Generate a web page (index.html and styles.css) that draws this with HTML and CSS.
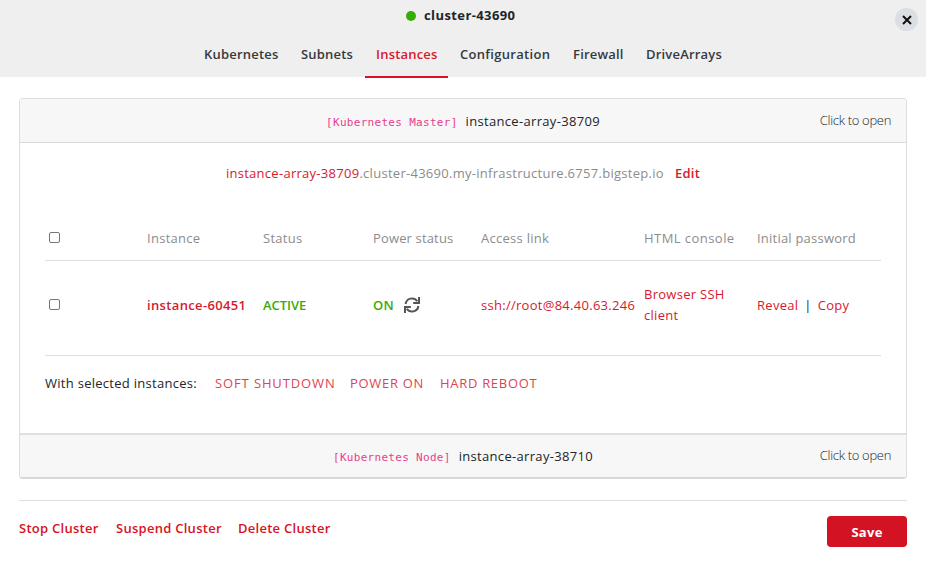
FILE: index.html
```html
<!DOCTYPE html>
<html lang="en">
<head>
<meta charset="utf-8">
<title>cluster-43690</title>
<link rel="stylesheet" href="styles.css">
</head>
<body>
<header class="header">
  <div class="title"><span class="dot"></span><span class="title-text">cluster-43690</span></div>
  <button class="close" aria-label="Close"><svg width="10" height="10" viewBox="0 0 10 10"><path d="M1 1L9 9M9 1L1 9" stroke="#111" stroke-width="2"/></svg></button>
  <nav class="tabs">
    <a class="tab">Kubernetes</a>
    <a class="tab">Subnets</a>
    <a class="tab active">Instances</a>
    <a class="tab wide">Configuration</a>
    <a class="tab">Firewall</a>
    <a class="tab">DriveArrays</a>
  </nav>
</header>
<main class="main">
  <section class="panel">
    <div class="bar bar-top">
      <span></span>
      <div class="bar-title"><code>[Kubernetes Master]</code><span class="array">instance-array-38709</span></div>
      <span class="hint">Click to open</span>
    </div>
    <div class="content">
      <div class="host"><span class="red">instance-array-38709</span><span>.cluster-43690.my-infrastructure.6757.bigstep.io</span><a class="red edit">Edit</a></div>
      <div class="row head">
        <input type="checkbox">
        <span>Instance</span><span>Status</span><span class="power-label">Power status</span><span>Access link</span><span class="console-label">HTML console</span><span class="password-label">Initial password</span>
      </div>
      <div class="row data">
        <input type="checkbox">
        <a class="red name">instance-60451</a>
        <span class="green active-state">ACTIVE</span>
        <span class="power"><span class="green on">ON</span><svg width="16" height="16" viewBox="0 0 16 16" fill="none" stroke="#555" stroke-width="2"><path d="M1.6 7A6.4 6.4 0 0 1 13.2 4.2M14.4 9A6.4 6.4 0 0 1 2.8 11.8"/><path d="M15 0V6H9.2M1 16V10H6.8"/></svg></span>
        <a class="red">ssh://root@84.40.63.246</a>
        <a class="red">Browser SSH<br>client</a>
        <span><a class="red">Reveal</a><span class="sep">|</span><a class="red">Copy</a></span>
      </div>
      <div class="actions"><span class="with">With selected instances:</span><a class="soft">SOFT SHUTDOWN</a><a class="on-action">POWER ON</a><a>HARD REBOOT</a></div>
    </div>
    <div class="bar bar-bottom">
      <span></span>
      <div class="bar-title"><code>[Kubernetes Node]</code><span class="array">instance-array-38710</span></div>
      <span class="hint">Click to open</span>
    </div>
  </section>
  <footer class="footer">
    <a class="stop">Stop Cluster</a><a class="suspend">Suspend Cluster</a><a>Delete Cluster</a>
    <button class="save">Save</button>
  </footer>
</main>
</body>
</html>
```
FILE: styles.css
```css
* { box-sizing: border-box; }
body { margin: 0; background: #fff; color: #212529; font: 13px/21px "Open Sans", sans-serif; letter-spacing: .28px; white-space: nowrap; }
button { font: inherit; letter-spacing: inherit; border: 0; padding: 0; }
.header { position: relative; height: 77px; background: #efefef; }
.title { display: flex; align-items: center; height: 31px; padding-left: 406px; font-weight: 700; letter-spacing: .4px; }
.dot { width: 10px; height: 10px; margin-right: 8px; border-radius: 50%; background: #37ac04; }
.close { position: absolute; top: 8px; right: 8px; width: 23px; height: 23px; border-radius: 50%; background: #dbdee4; display: flex; align-items: center; justify-content: center; }
.tabs { display: grid; grid-template-columns: 97px 75px 84px 113px 73px 96px; height: 47px; margin-left: 193px; font-weight: 600; letter-spacing: .2px; color: #343a40; }
.tab { padding: 13px 0 0 11px; }
.tab.active { width: 83px; border-bottom: 2px solid #d61224; color: #d61a2c; }
.wide { letter-spacing: .3px; }
.main { padding: 21px 19px 0; }
.panel { border: 1px solid #dedede; border-bottom: 2px solid #d8d8d8; border-radius: 4px; height: 381px; overflow: hidden; }
.bar { display: grid; grid-template-columns: 1fr auto 1fr; align-items: center; height: 44px; padding: 0 15px; background: #f7f7f7; color: #212529; }
.bar-top { border-bottom: 1px solid #d8d8d8; }
.bar-title { padding-top: 1px; }
.bar-bottom { height: 45px; border-top: 2px solid #dfdfdf; }
.bar-bottom .bar-title { padding-top: 0; }
.bar-bottom .hint { margin-top: -2px; }
code { margin-right: 8px; font: 11px "DejaVu Sans Mono", monospace; letter-spacing: .3px; color: #e83e8c; }
.array { letter-spacing: .32px; }
.hint { justify-self: end; font-weight: 300; letter-spacing: -.32px; }
.content { height: 290px; padding: 0 25px; }
.red { color: #d61a2c; }
.green { color: #37ac04; font-weight: 600; }
.host { height: 84px; padding-top: 20px; text-align: center; color: #8c8c8c; }
.edit { margin-left: 11px; font-weight: 600; }
.row { display: grid; grid-template-columns: 102px 116px 110px 108px 163px 113px 124px; align-items: center; border-bottom: 1px solid #dedede; }
.row input { width: 11px; height: 11px; margin: 0 0 2px 4px; appearance: none; border: 1px solid #777; border-radius: 2px; background: #fff; }
.head { height: 34px; padding-bottom: 11px; color: #8c8c8c; }
.power-label { letter-spacing: .15px; }
.console-label { letter-spacing: .45px; }
.password-label { letter-spacing: .22px; }
.data { height: 95px; padding-bottom: 6px; }
.name { font-weight: 600; letter-spacing: .35px; }
.active-state { letter-spacing: -.05px; }
.power { display: flex; align-items: center; }
.power svg { margin: 0 0 0 10px; }
.sep { margin: 0 6px; }
.actions { display: flex; padding-top: 17px; }
.actions a { color: #df4352; letter-spacing: .7px; }
.with { width: 170px; }
.soft { width: 135px; }
.actions .soft { letter-spacing: .88px; }
.on-action { width: 90px; }
.footer { display: flex; height: 69px; margin-top: 21px; padding-top: 15px; border-top: 1px solid #dedede; }
.footer a { padding-top: 2px; color: #d61224; font-weight: 600; letter-spacing: .27px; }
.stop { width: 97px; }
.suspend { width: 122px; }
.save { width: 80px; height: 31px; margin-left: auto; padding-top: 2px; border-radius: 4px; background: #d31224; color: #fff; font-weight: 700; }
```
